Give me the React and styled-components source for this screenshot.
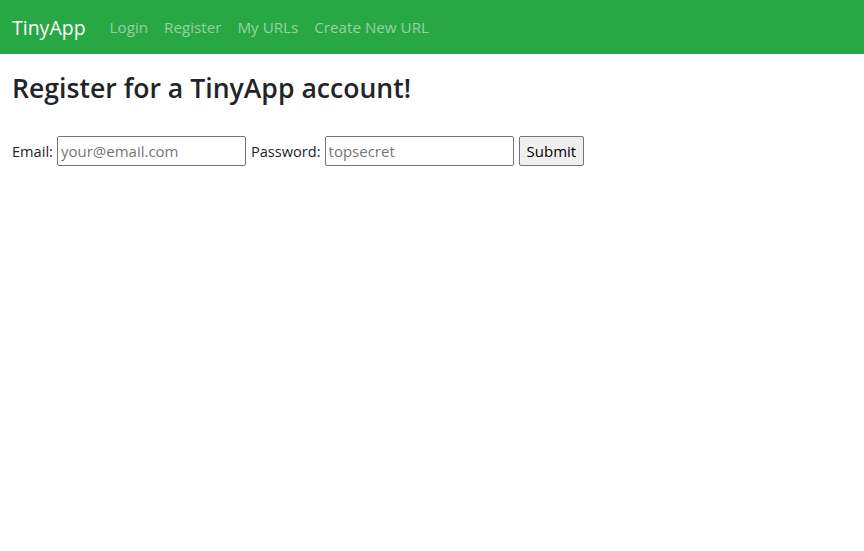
import React from 'react';
import styled, { createGlobalStyle } from 'styled-components';

const GlobalStyle = createGlobalStyle`
  body {
    margin: 0;
    background: #fff;
    color: #212529;
    font-family: "Open Sans", "Noto Sans", sans-serif;
    font-size: 15px;
  }
`;

// Navbar
const NavBar = styled.nav`
  display: flex;
  align-items: center;
  height: 54px;
  padding: 0 12px;
  background-color: #28a745;
`;

const Brand = styled.a`
  color: #fff;
  font-size: 19.5px;
  text-decoration: none;
  margin-right: 24px;
`;

const NavLinks = styled.div`
  display: flex;
  gap: 16px;
`;

const NavLink = styled.a`
  color: rgba(255, 255, 255, 0.5);
  font-size: 15.2px;
  text-decoration: none;
`;

// Main
const Main = styled.main`
  padding: 0 12px;
`;

const Heading = styled.h2`
  margin: 17px 0 30px;
  font-size: 26.6px;
  font-weight: 600;
  line-height: 1.3;
`;

const Form = styled.form`
  display: flex;
  align-items: center;
`;

const Label = styled.label`
  font-size: 14.6px;
  margin-right: 4px;
`;

const Input = styled.input`
  box-sizing: border-box;
  width: 189px;
  height: 30px;
  margin-right: 5px;
  padding: 1px 3px;
  border: 1px solid #767676;
  border-radius: 2px;
  font-family: inherit;
  font-size: 15px;
  color: #212529;

  &::placeholder {
    color: #757575;
  }
`;

const SubmitButton = styled.button`
  box-sizing: border-box;
  height: 30px;
  padding: 0 7px;
  border: 1px solid #767676;
  border-radius: 2px;
  background: #efefef;
  font-family: inherit;
  font-size: 15px;
  color: #000;
`;

const App = () => {
  return (
    <>
      <GlobalStyle />
      <NavBar>
        <Brand href="#">TinyApp</Brand>
        <NavLinks>
          <NavLink href="#">Login</NavLink>
          <NavLink href="#">Register</NavLink>
          <NavLink href="#">My URLs</NavLink>
          <NavLink href="#">Create New URL</NavLink>
        </NavLinks>
      </NavBar>
      <Main>
        <Heading>Register for a TinyApp account!</Heading>
        <Form>
          <Label htmlFor="email">Email:</Label>
          <Input id="email" type="email" placeholder="your@email.com" />
          <Label htmlFor="password">Password:</Label>
          <Input id="password" type="password" placeholder="topsecret" />
          <SubmitButton type="submit">Submit</SubmitButton>
        </Form>
      </Main>
    </>
  );
};

export default App;
